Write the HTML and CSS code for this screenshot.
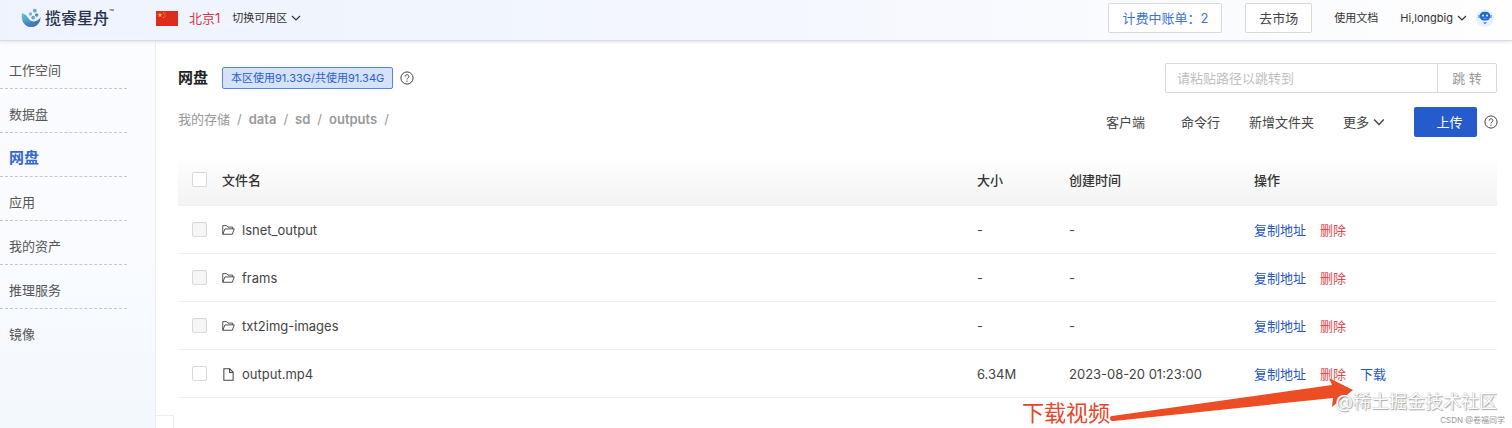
FILE: index.html
```html
<!DOCTYPE html>
<html lang="zh-CN">
<head>
<meta charset="utf-8">
<meta name="viewport" content="width=device-width, initial-scale=1">
<title>网盘</title>
<link rel="stylesheet" href="styles.css">
</head>
<body>
<svg class="defs" aria-hidden="true">
  <symbol id="chevron" viewBox="0 0 10 10"><path d="M1 3l4 4 4-4" fill="none" stroke="currentColor" stroke-width="1.2"/></symbol>
  <symbol id="help" viewBox="0 0 14 14"><g fill="none" stroke="currentColor"><circle cx="7" cy="7" r="6.1"/><path d="M5.1 5.6c0-2.5 3.8-2.4 3.8-.1 0 1.5-1.9 1.5-1.9 2.9"/></g><circle cx="7" cy="10.1" r=".7" fill="currentColor"/></symbol>
  <symbol id="folder" viewBox="0 0 14 12"><path d="M.8 10.6V1.3h4l1.5 1.6h5.2v1.900M.8 10.6l2.400-5.800h10l-2.100 5.800z" fill="none" stroke="currentColor"/></symbol>
  <symbol id="file" viewBox="0 0 12 14"><path d="M1 .9h6.400L11 4.600v8.500H1zM7.100.9v4H11" fill="none" stroke="currentColor" stroke-width="1.1"/></symbol>
</svg>
<header class="topbar">
  <a class="logo" href="#">
    <svg class="logo-mark" viewBox="0 0 20 20" aria-hidden="true">
      <defs><linearGradient id="wave" x1="0" y1="0" x2="1" y2="1"><stop offset="0" stop-color="#6cc4dc"/><stop offset=".5" stop-color="#4a92c4"/><stop offset="1" stop-color="#354f9c"/></linearGradient></defs>
      <path d="M1 5.2C-.5 13 4 19 10.200 19c5.600 0 9.500-4.500 9.300-10-2 4-6 5.400-9.500 3.700C6.500 11 6.500 6 1 5.200z" fill="url(#wave)"/>
      <path d="M1.500 12c3 4 10 4.500 16.500 1-2 4.500-5 6-8 6-4 0-7-2.500-8.500-7z" fill="#4a7fbd" opacity=".6"/>
      <circle cx="13.800" cy="2.700" r="1.900" fill="#5faed6"/><circle cx="9.500" cy="6" r="1.700" fill="#74b9dc"/><circle cx="15.700" cy="7" r="1.700" fill="#4d8bc2"/><circle cx="12.200" cy="9.600" r="1.900" fill="#62a5d0"/>
    </svg>
    <span class="logo-name">揽睿星舟</span><sup class="tm">™</sup>
  </a>
  <div class="region">
    <svg class="flag" viewBox="0 0 22 15" aria-hidden="true"><rect width="22" height="15" fill="#de2d1c"/><path d="M4 1.500l.6 1.700h1.800L5 4.300l.5 1.700L4 5 2.500 6 3 4.300 1.600 3.200h1.800z" fill="#ffd43a"/><g fill="#f2a52e"><circle cx="7.600" cy="1.800" r=".6"/><circle cx="9" cy="3.200" r=".6"/><circle cx="9" cy="5" r=".6"/><circle cx="7.600" cy="6.400" r=".6"/></g></svg>
    <span class="region-name">北京1</span>
    <button class="plain small" type="button">切换可用区<svg class="chevron" aria-hidden="true"><use href="#chevron"/></svg></button>
  </div>
  <nav class="account">
    <a class="boxed bill" href="#">计费中账单：2</a>
    <a class="boxed" href="#">去市场</a>
    <a class="small docs" href="#">使用文档</a>
    <button class="plain small" type="button">Hi,longbig<svg class="chevron" aria-hidden="true"><use href="#chevron"/></svg></button>
    <svg class="bot" viewBox="0 0 18 18" aria-hidden="true"><circle cx="9" cy="9" r="9" fill="#e6f0fe"/><rect x="3.700" y="2.700" width="10.600" height="8.800" rx="4.200" fill="#2468d2"/><path d="M3 6v3M15 6v3" stroke="#2468d2"/><circle cx="7" cy="6.600" r="1.100" fill="#d5e7ff"/><circle cx="11" cy="6.600" r="1.100" fill="#d5e7ff"/><path d="M7.300 9.300h3.400" stroke="#82b2f4" stroke-width=".8"/><path d="M7 13.300h4L9 15.300z" fill="#3c7ae0"/></svg>
  </nav>
</header>
<div class="shell">
  <nav class="sidebar">
    <a href="#">工作空间</a>
    <a href="#">数据盘</a>
    <a class="active" href="#" aria-current="page">网盘</a>
    <a href="#">应用</a>
    <a href="#">我的资产</a>
    <a href="#">推理服务</a>
    <a href="#">镜像</a>
  </nav>
  <main class="content">
    <div class="title-row">
      <h1>网盘</h1>
      <span class="usage">本区使用91.33G/共使用91.34G</span>
      <svg class="help" aria-hidden="true"><use href="#help"/></svg>
      <form class="jump">
        <input type="text" placeholder="请粘贴路径以跳转到" aria-label="请粘贴路径以跳转到">
        <button type="button">跳 转</button>
      </form>
    </div>
    <div class="tool-row">
      <nav class="crumbs">
        <a class="root" href="#">我的存储</a><span>/</span><a href="#">data</a><span>/</span><a href="#">sd</a><span>/</span><a href="#">outputs</a><span>/</span>
      </nav>
      <div class="tools">
        <button class="plain client" type="button">客户端</button>
        <button class="plain" type="button">命令行</button>
        <button class="plain" type="button">新增文件夹</button>
        <button class="plain" type="button">更多<svg class="chevron wide" aria-hidden="true"><use href="#chevron"/></svg></button>
        <button class="upload" type="button">上传</button>
        <svg class="help" aria-hidden="true"><use href="#help"/></svg>
      </div>
    </div>
    <table class="files">
      <colgroup><col class="c-check"><col><col class="c-size"><col class="c-time"><col class="c-ops"></colgroup>
      <thead>
        <tr><th><input type="checkbox" aria-label="全选"></th><th>文件名</th><th>大小</th><th>创建时间</th><th>操作</th></tr>
      </thead>
      <tbody>
        <tr><td><input type="checkbox" disabled aria-label="lsnet_output"></td><td><div class="name"><svg class="folder" aria-hidden="true"><use href="#folder"/></svg>lsnet_output</div></td><td>-</td><td>-</td><td><div class="ops"><a href="#">复制地址</a><a class="delete" href="#">删除</a></div></td></tr>
        <tr><td><input type="checkbox" disabled aria-label="frams"></td><td><div class="name"><svg class="folder" aria-hidden="true"><use href="#folder"/></svg>frams</div></td><td>-</td><td>-</td><td><div class="ops"><a href="#">复制地址</a><a class="delete" href="#">删除</a></div></td></tr>
        <tr><td><input type="checkbox" disabled aria-label="txt2img-images"></td><td><div class="name"><svg class="folder" aria-hidden="true"><use href="#folder"/></svg>txt2img-images</div></td><td>-</td><td>-</td><td><div class="ops"><a href="#">复制地址</a><a class="delete" href="#">删除</a></div></td></tr>
        <tr><td><input type="checkbox" aria-label="output.mp4"></td><td><div class="name"><svg class="file" aria-hidden="true"><use href="#file"/></svg>output.mp4</div></td><td>6.34M</td><td>2023-08-20 01:23:00</td><td><div class="ops"><a href="#">复制地址</a><a class="delete" href="#">删除</a><a href="#">下载</a></div></td></tr>
      </tbody>
    </table>
    <div class="collapse"></div>
    <div class="note">
      <span>下载视频</span>
      <svg viewBox="0 0 244 32" aria-hidden="true"><path d="M2 37L222 6l-3-7 24 12-21 17 1-9L4 42C-1 42.500-1 37.500 2 37z" fill="#ec4d25"/></svg>
    </div>
    <div class="watermark">@稀土掘金技术社区</div>
    <div class="credit">CSDN @卷福同学</div>
  </main>
</div>
</body>
</html>
```
FILE: styles.css
```css
* { box-sizing: border-box; }
body {
  margin: 0;
  min-height: 100vh;
  display: flex;
  flex-direction: column;
  overflow: hidden;
  background: #fff;
  color: #444;
  font: 13px/20px Inter, "Noto Sans CJK SC", sans-serif;
}
a { color: inherit; text-decoration: none; }
svg { display: block; flex: none; }
button, input { font: inherit; color: inherit; margin: 0; }
.defs { position: absolute; width: 0; height: 0; }
.plain {
  display: flex;
  align-items: center;
  gap: 4px;
  padding: 0;
  border: 0;
  background: none;
}
.small { font-size: 11px; color: #333; }
.chevron { width: 10px; height: 10px; }
.chevron.wide { width: 12px; height: 12px; }
.help { width: 14px; height: 14px; }

.topbar {
  position: relative;
  display: flex;
  align-items: center;
  height: 41px;
  padding: 0 18px 4px 21px;
  background: linear-gradient(90deg, #eef3fe, #f4f7fe 50%, #fefefe);
  border-bottom: 1px solid #d9dde6;
  box-shadow: 0 1px 3px #dfe3ea;
}
.logo { display: flex; align-items: center; color: #28304a; }
.logo-mark { width: 20px; height: 20px; margin-right: 4px; }
.logo-name { font-size: 16px; font-weight: 500; }
.tm { align-self: flex-start; font-size: 8px; line-height: 8px; }
.region { display: flex; align-items: center; margin-left: 42px; }
.flag { width: 22px; height: 15px; }
.region-name { margin: 0 12px 0 11px; color: #d9363e; }
.account { display: flex; align-items: center; margin-left: auto; }
.boxed {
  padding: 4px 13px;
  border: 1px solid #d9d9d9;
  border-radius: 2px;
  background: #fff;
  line-height: 20px;
}
.bill { margin-right: 23px; color: #3c73d6; }
.docs { margin: 0 22px; }
.bot { width: 18px; height: 18px; margin-left: 9px; }

.shell { display: flex; flex: 1; }
.sidebar {
  width: 156px;
  padding: 4px 28px 0 0;
  border-right: 1px solid #e9edf2;
  background: linear-gradient(#fbfcff, #f9fbff 50%, #f3f8fd);
}
.sidebar a {
  display: block;
  height: 44px;
  padding: 15px 0 8px 9px;
  border-bottom: 1px dashed #c4c8ce;
  color: #555;
}
.sidebar a:last-child { border-bottom: 0; }
.sidebar .active { color: #3468cf; font-size: 15px; font-weight: 700; }

.content {
  position: relative;
  flex: 1;
  min-width: 0;
  padding: 22px 15px 0 22px;
}
.title-row { display: flex; align-items: center; }
h1 { margin: 0 14px 0 0; font-size: 15px; line-height: 20px; color: #222; }
.usage {
  margin-right: 7px;
  padding: 0 8px;
  border: 1px solid #5387e2;
  border-radius: 2px;
  background: #d5e2fa;
  color: #2c5fcd;
  font-size: 11px;
}
.jump { display: flex; width: 332px; margin-left: auto; }
.jump input, .jump button {
  height: 30px;
  border: 1px solid #d9d9d9;
  background: #fff;
}
.jump input { flex: 1; min-width: 0; padding: 0 11px; border-radius: 2px 0 0 2px; }
.jump input::placeholder { color: #bfbfbf; }
.jump button { width: 60px; margin-left: -1px; padding: 0; border-radius: 0 2px 2px 0; color: #999; }
.tool-row { display: flex; align-items: flex-start; justify-content: space-between; margin-top: 14px; }
.crumbs { display: flex; gap: 7px; line-height: 24px; color: #999; font-weight: 600; }
.crumbs .root, .crumbs span { font-weight: 400; }
.tools { display: flex; align-items: center; gap: 29px; margin-right: -1px; }
.client { margin-right: 7px; }
.upload {
  width: 63px;
  height: 30px;
  padding: 0 0 0 8px;
  border: 0;
  border-radius: 2px;
  background: #255bcb;
  color: #fff;
}
.tools .help { margin-left: -22px; }

.files { width: 100%; margin-top: 18px; border-collapse: collapse; table-layout: fixed; }
.c-check { width: 44px; }
.c-size { width: 92px; }
.c-time { width: 185px; }
.c-ops { width: 243px; }
.files th, .files td { height: 48px; padding: 0; text-align: left; border-bottom: 1px solid #f0f0f0; }
.files th { height: 50px; color: #333; font-weight: 500; }
.files td + td { padding-top: 2px; }
.files thead tr { background: linear-gradient(#fff, #f3f3f3); }
.files input {
  appearance: none;
  display: block;
  width: 15px;
  height: 15px;
  margin-left: 14px;
  border: 1px solid #d9d9d9;
  border-radius: 2px;
  background: #fff;
}
.files input:disabled { background: #f5f5f5; }
.name { display: flex; align-items: center; gap: 7px; }
.folder { width: 13px; height: 12px; }
.file { width: 13px; height: 13px; }
.ops { display: flex; gap: 14px; color: #2456c4; }
.delete { color: #e84749; }

.collapse {
  position: absolute;
  left: 0;
  bottom: 0;
  width: 18px;
  height: 13px;
  border: 1px solid #ececec;
  border-width: 1px 1px 0 0;
}
.note {
  position: absolute;
  right: 158px;
  bottom: 0;
  display: flex;
  align-items: flex-end;
  color: #e8452c;
  font-size: 22px;
  line-height: 30px;
}
.note svg { width: 244px; height: 32px; margin-bottom: 17px; overflow: visible; }
.watermark {
  position: absolute;
  right: 15px;
  bottom: 14px;
  color: #fff;
  font-size: 18px;
  line-height: 24px;
  text-shadow: 0 0 1px #999, 1px 1px 1px #aaa;
}
.credit {
  position: absolute;
  right: 7px;
  bottom: 2px;
  color: #999;
  font-size: 8px;
  line-height: 12px;
}
```
